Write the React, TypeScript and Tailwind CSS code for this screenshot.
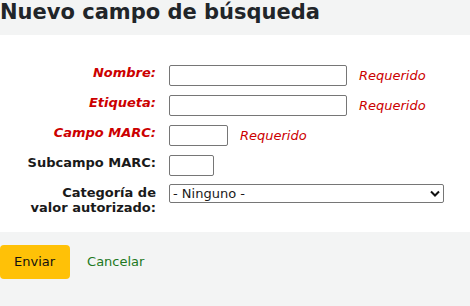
import React from 'react';

const font = { fontFamily: '"DejaVu Sans", Verdana, sans-serif' };

function Row({
  label,
  required,
  width,
}: {
  label: string;
  required?: boolean;
  width: string;
}) {
  return (
    <div className="flex items-start">
      <label
        className={`w-[130px] mr-[13px] text-right text-[13px] leading-[15px] font-bold ${
          required ? 'italic text-[#cc0000]' : 'text-[#1a1a1a]'
        }`}
      >
        {label}
      </label>
      <div className="flex items-center gap-[12px]">
        <input
          type="text"
          className={`${width} h-[21px] block border border-[#767676] rounded-[2px] bg-white`}
        />
        {required && <span className="text-[13px] italic text-[#cc0000]">Requerido</span>}
      </div>
    </div>
  );
}

export default function App() {
  return (
    <div className="min-h-screen bg-[#f3f4f4] text-[#212529]" style={font}>
      <h1 className="text-[21px] leading-[24px] font-bold text-[#212529] mb-[11px]">
        Nuevo campo de búsqueda
      </h1>

      <div className="bg-white pt-[30px] pb-[17px] pl-[26px] flex flex-col gap-[9px]">
        <Row label="Nombre:" required width="w-[178px]" />
        <Row label="Etiqueta:" required width="w-[178px]" />
        <Row label="Campo MARC:" required width="w-[59px]" />
        <Row label="Subcampo MARC:" width="w-[45px]" />
        <div className="flex items-start">
          <label className="w-[130px] mr-[13px] text-right text-[13px] leading-[15px] font-bold text-[#1a1a1a]">
            Categoría de valor autorizado:
          </label>
          <div className="relative w-[275px] h-[19px] -mt-[1px]">
            <select className="block appearance-none w-full h-full border border-[#767676] rounded-[2px] bg-white pl-[3px] text-[13px] leading-[15px] text-[#1a1a1a]">
              <option>- Ninguno -</option>
            </select>
            <svg
              className="absolute right-[4px] top-[6px] pointer-events-none"
              width="10"
              height="7"
              viewBox="0 0 10 7"
            >
              <path d="M1 1.5 L5 5.5 L9 1.5" fill="none" stroke="#111" strokeWidth="2" />
            </svg>
          </div>
        </div>
      </div>

      <div className="flex items-center pt-[13px]">
        <button className="h-[34px] pl-[14px] pr-[15px] bg-[#ffc107] rounded-[4px] text-[13px] text-[#111]">
          Enviar
        </button>
        <a href="#" className="ml-[17px] text-[13px] text-[#217821]">
          Cancelar
        </a>
      </div>
    </div>
  );
}
